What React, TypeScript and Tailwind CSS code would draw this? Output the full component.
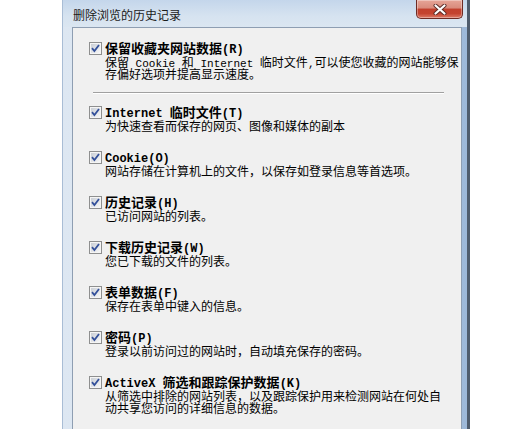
import React from "react";

type Item = { title: string; lines: string[] };

const items: Item[] = [
  { title: "Internet 临时文件(T)", lines: ["为快速查看而保存的网页、图像和媒体的副本"] },
  { title: "Cookie(O)", lines: ["网站存储在计算机上的文件，以保存如登录信息等首选项。"] },
  { title: "历史记录(H)", lines: ["已访问网站的列表。"] },
  { title: "下载历史记录(W)", lines: ["您已下载的文件的列表。"] },
  { title: "表单数据(F)", lines: ["保存在表单中键入的信息。"] },
  { title: "密码(P)", lines: ["登录以前访问过的网站时，自动填充保存的密码。"] },
  {
    title: "ActiveX 筛选和跟踪保护数据(K)",
    lines: ["从筛选中排除的网站列表，以及跟踪保护用来检测网站在何处自", "动共享您访问的详细信息的数据。"],
  },
];

// latin runs get a narrower monospace face, like the old SimSun half-width glyphs
function Mixed({ text, latin }: { text: string; latin: string }) {
  const parts = text.split(/([\x20-\x7E]+)/).filter(Boolean);
  return (
    <>
      {parts.map((p, i) =>
        /^[\x20-\x7E]+$/.test(p) ? (
          <span key={i} className={latin}>
            {p}
          </span>
        ) : (
          <span key={i}>{p}</span>
        )
      )}
    </>
  );
}

function Check() {
  return (
    <svg width="13" height="13" viewBox="0 0 13 13" className="mt-[1px] shrink-0">
      <defs>
        <linearGradient id="cbg" x1="0" y1="0" x2="1" y2="1">
          <stop offset="0" stopColor="#c9ced6" />
          <stop offset="1" stopColor="#f7f7f7" />
        </linearGradient>
      </defs>
      <rect x="0.5" y="0.5" width="12" height="12" fill="#f5f5f5" stroke="#8e8f8f" />
      <rect x="2" y="2" width="9" height="9" fill="url(#cbg)" />
      <path d="M3 6.2 L5.4 9 L10 3" stroke="#33509a" strokeWidth="1.8" fill="none" />
    </svg>
  );
}

function Option({ title, lines }: Item) {
  return (
    <div className="flex">
      <Check />
      <div className="ml-[3px] flex flex-col">
        <div className="h-[14px] whitespace-pre text-[13px] font-bold leading-[14px] text-black">
          <Mixed text={title} latin="font-['Liberation_Mono',monospace] text-[12px] leading-[14px]" />
        </div>
        <div className="mt-[1px] flex flex-col whitespace-pre text-[12px] leading-[12px] text-black">
          {lines.map((l, i) => (
            <div key={i} className="h-[12px]">
              <Mixed text={l} latin="font-['Liberation_Mono',monospace] text-[11px] leading-[12px]" />
            </div>
          ))}
        </div>
      </div>
    </div>
  );
}

export default function App() {
  return (
    <div className="h-[429px] w-[523px] overflow-hidden bg-white font-['Noto_Sans_CJK_SC','Liberation_Sans',sans-serif]">
      <div className="ml-[62px] flex h-[429px] w-[408px] flex-col border-l border-r-[3px] border-l-[#a9bdd5] border-r-[#4f5c6c] bg-[linear-gradient(to_right,#dde7f2,#cfdcec_60%,#9db8d8)]">
        {/* title bar */}
        <div className="flex h-[27px] shrink-0 items-start bg-[linear-gradient(to_bottom,#c4d6eb,#d6e3f0_60%,#dbe6f1)]">
          <span className="pl-[10px] pt-[8px] text-[12px] leading-[14px] text-[#1b1b1b]">
            删除浏览的历史记录
          </span>
          <div className="ml-auto mr-[4px] flex h-[19px] w-[47px] items-center justify-center rounded-b-[5px] border border-t-0 border-[#6e2b24] bg-[linear-gradient(to_bottom,#e6a597,#d98a7b_45%,#c2402d_50%,#c4432f_75%,#dc7a66)] shadow-[inset_0_0_0_1px_rgba(255,255,255,0.35)]">
            <svg width="14" height="11" viewBox="0 0 14 11">
              <path d="M2.5 1.5 L11.5 9.5 M11.5 1.5 L2.5 9.5" stroke="#5a2a25" strokeWidth="4" strokeLinecap="round" />
              <path d="M2.5 1.5 L11.5 9.5 M11.5 1.5 L2.5 9.5" stroke="#ffffff" strokeWidth="2.2" strokeLinecap="round" />
            </svg>
          </div>
        </div>

        {/* content panel */}
        <div className="ml-[9px] mr-[5px] flex-1 border border-b-0 border-[#8e9eb2] bg-[#f0f0f0] pl-[16px] pt-[13px]">
          <Option
            title="保留收藏夹网站数据(R)"
            lines={["保留 Cookie 和 Internet 临时文件,可以使您收藏的网站能够保", "存偏好选项并提高显示速度。"]}
          />
          <div className="ml-[4px] mr-[17px] mt-[12px] mb-[11px] border-t border-b border-t-[#a0a0a0] border-b-white" />
          <div className="flex flex-col gap-[18px]">
            {items.map((it) => (
              <Option key={it.title} {...it} />
            ))}
          </div>
        </div>
      </div>
    </div>
  );
}
